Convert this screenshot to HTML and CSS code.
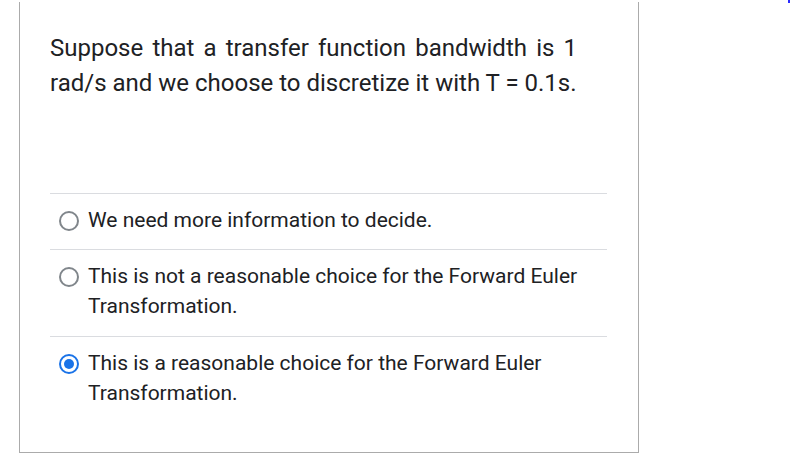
FILE: index.html
```html
<!DOCTYPE html>
<html>
<head>
<meta charset="utf-8">
<link rel="stylesheet" href="styles.css">
</head>
<body>
<span class="corner-dot"></span>
<div class="card">
  <p class="question">Suppose that a transfer function bandwidth is 1 rad/s and we choose to discretize it with T = 0.1s.</p>
  <div class="options">
    <div class="option">
      <span class="radio"></span>
      <span class="label">We need more information to decide.</span>
    </div>
    <div class="option">
      <span class="radio"></span>
      <span class="label">This is not a reasonable choice for the Forward Euler Transformation.</span>
    </div>
    <div class="option">
      <span class="radio checked"></span>
      <span class="label">This is a reasonable choice for the Forward Euler Transformation.</span>
    </div>
  </div>
</div>
</body>
</html>
```
FILE: styles.css
```css
html, body {
  margin: 0;
  padding: 0;
  background: #fff;
}
body {
  font-family: Roboto, "Liberation Sans", sans-serif;
  color: #202124;
  position: relative;
  width: 790px;
  height: 465px;
  overflow: hidden;
}
.corner-dot {
  position: absolute;
  left: 788px;
  top: 0;
  width: 2px;
  height: 3px;
  background: #2b2bff;
}
.card {
  margin: 2px 0 0 19px;
  width: 620px;
  height: 451px;
  border: 1px solid #ababab;
  border-top: none;
  padding: 0 31px 0 30px;
  box-sizing: border-box;
}
.question {
  margin: 0;
  padding: 29px 30px 0 0;
  font-size: 24px;
  line-height: 35px;
  text-align: justify;
}
.options {
  margin-top: 92px;
}
.option {
  display: flex;
  align-items: flex-start;
  border-top: 1px solid #dadce0;
  padding: 11px 0 14.4px 0;
}
.radio {
  flex: none;
  width: 20px;
  height: 20px;
  box-sizing: border-box;
  border: 2px solid #80868b;
  border-radius: 50%;
  margin: 6px 9px 0 9px;
  position: relative;
}
.radio.checked {
  border-color: #1a73e8;
}
.radio.checked::after {
  content: "";
  position: absolute;
  left: 3px;
  top: 3px;
  width: 10px;
  height: 10px;
  border-radius: 50%;
  background: #1a73e8;
}
.label {
  font-size: 21px;
  line-height: 30px;
}
```
